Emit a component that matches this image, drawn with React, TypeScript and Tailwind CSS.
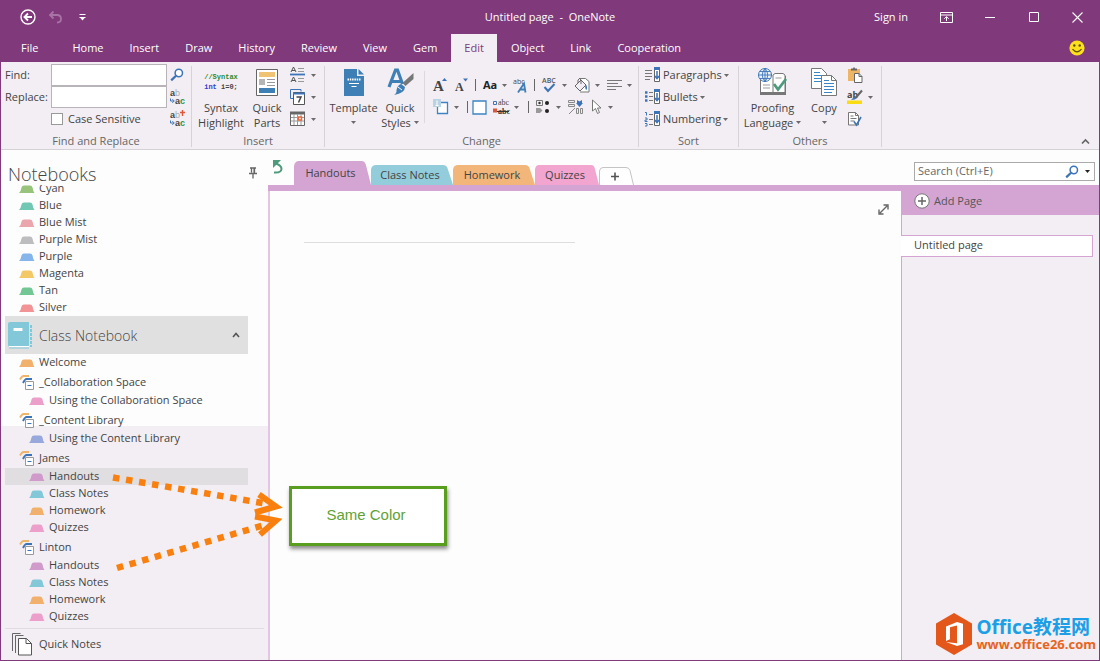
import type { ReactNode } from "react";

function Caret({ dark = false }: { dark?: boolean }) {
  return (
    <svg width="5" height="3" viewBox="0 0 5 3" className="shrink-0" aria-hidden="true">
      <path d="M0 0h5L2.5 3z" fill={dark ? "#222" : "#6a6a6a"} />
    </svg>
  );
}

function Icon({ w = 16, h = 16, children }: { w?: number; h?: number; children: ReactNode }) {
  return (
    <svg width={w} height={h} viewBox={`0 0 ${w} ${h}`} fill="none" className="shrink-0 overflow-visible" aria-hidden="true">
      {children}
    </svg>
  );
}

function SearchIcon() {
  return (
    <Icon w={14} h={14}>
      <circle cx="8.8" cy="5" r="3.7" stroke="#3d74b8" strokeWidth="1.5" fill="#fff" />
      <path d="M6 7.8L1.2 12.4" stroke="#3d74b8" strokeWidth="2.2" />
    </Icon>
  );
}

function ReplaceIcon({ all = false }: { all?: boolean }) {
  return (
    <Icon w={16} h={18}>
      <text x="0" y="8" fontFamily="Liberation Sans, sans-serif" fontSize="9" fontWeight="700" fill="#444">a</text>
      <text x="5" y="8" fontFamily="Liberation Sans, sans-serif" fontSize="9" fill="#aaa">b</text>
      <path d="M.5 10.500v2.500h3M2.300 11.300l2 1.700-2 1.700" stroke="#3d74b8" />
      <text x="5" y="16" fontFamily="Liberation Sans, sans-serif" fontSize="9" fontWeight="700" fill="#444">a</text>
      <text x="10" y="16" fontFamily="Liberation Sans, sans-serif" fontSize="9" fontWeight="700" fill="#2d9640">c</text>
      {all && <path d="M12.500 0v6M10 2.500h5" stroke="#e2553a" strokeWidth="1.400" />}
    </Icon>
  );
}

function Group({ label, className, children }: { label: string; className: string; children: ReactNode }) {
  return (
    <section aria-label={label} className={`flex shrink-0 flex-col ${className}`}>
      <div className="flex h-[69px]">{children}</div>
      <div className="text-center leading-4 text-[#666]">{label}</div>
    </section>
  );
}

function Divider() {
  return <div className="my-0.5 w-px shrink-0 bg-[#d6d2d8]" />;
}

function BigButton({ icon, lines, caret, className }: { icon: ReactNode; lines: string[]; caret?: boolean; className: string }) {
  return (
    <button className={`flex shrink-0 flex-col items-center whitespace-nowrap leading-[15px] ${className}`}>
      <span className="flex h-9 items-center">{icon}</span>
      <span>{lines[0]}</span>
      <span className="flex h-[15px] items-center gap-[3px]">
        {lines[1]}
        {caret && <Caret />}
      </span>
    </button>
  );
}

function Tool({ label, caret, children }: { label: string; caret?: boolean; children: ReactNode }) {
  return (
    <button aria-label={label} title={label} className="flex h-[22px] items-center gap-[5px]">
      {children}
      {caret && <Caret />}
    </button>
  );
}

function Bar() {
  return <span className="h-3 w-px bg-[#666]" />;
}

const ribbonTabs = ["Home", "Insert", "Draw", "History", "Review", "View", "Gem", "Edit", "Object", "Link", "Cooperation"];

function TitleBar() {
  return (
    <header className="bg-[#80397b] text-white">
      <div className="grid h-[34px] grid-cols-[1fr_auto_1fr] items-center">
        <div className="flex items-center gap-3 pl-[19px]">
          <button aria-label="Back">
            <Icon>
              <circle cx="8" cy="8" r="7" stroke="#fff" strokeWidth="1.4" />
              <path d="M12 8H5M8 4.500L4.500 8 8 11.500" stroke="#fff" strokeWidth="1.900" />
            </Icon>
          </button>
          <button aria-label="Undo">
            <Icon w={15} h={14}>
              <path d="M5.500 1.500L2 5l3.500 3.500M2 5h7q4 0 4 4 0 3.500-4 3.500" stroke="#a873a5" strokeWidth="1.800" />
            </Icon>
          </button>
          <button aria-label="Customize Quick Access Toolbar" className="pl-1">
            <Icon w={7} h={8}>
              <path d="M.5 1.500h6M.5 4.500h6" stroke="#fff" />
              <path d="M1 4.500h5L3.500 7.500z" fill="#fff" />
            </Icon>
          </button>
        </div>
        <h1 className="whitespace-pre">Untitled page  -  OneNote</h1>
        <div className="flex items-center justify-end pr-4">
          <button className="mr-8">Sign in</button>
          <button aria-label="Ribbon Display Options" className="mr-8">
            <Icon w={13} h={11}>
              <path d="M.5.5h12v10H.5zM.5 3h12M6.500 9V4.800M4.300 6.800l2.200-2.200 2.200 2.200" stroke="#fff" />
            </Icon>
          </button>
          <button aria-label="Minimize" className="mr-[34px]">
            <Icon w={10} h={11}><path d="M0 5.500h10" stroke="#fff" /></Icon>
          </button>
          <button aria-label="Maximize" className="mr-8">
            <Icon w={11} h={11}><path d="M.5.5h9v9h-9z" stroke="#fff" /></Icon>
          </button>
          <button aria-label="Close">
            <Icon w={11} h={11}><path d="M.5.5l10 10M10.500.5l-10 10" stroke="#fff" strokeWidth="1.100" /></Icon>
          </button>
        </div>
      </div>
      <nav className="flex h-7 items-stretch pl-[7px] pr-[14px]">
        <button className="mr-2 px-[13px]">File</button>
        {ribbonTabs.map((t) => (
          <button key={t} className={t === "Edit" ? "mx-px bg-[#f2eef3] px-[13px] text-[#80397b]" : "px-[13px]"}>
            {t}
          </button>
        ))}
        <button aria-label="Feedback" className="ml-auto">
          <Icon>
            <circle cx="8" cy="8" r="7.600" fill="#fbe01c" />
            <circle cx="5.300" cy="5.500" r="1.200" fill="#5b4b12" />
            <circle cx="10.700" cy="5.500" r="1.200" fill="#5b4b12" />
            <path d="M3.500 9.200q4.500 5.300 9 0" stroke="#5b4b12" strokeWidth="1.200" />
          </Icon>
        </button>
      </nav>
    </header>
  );
}

function SortIcon({ kind }: { kind: string }) {
  return (
    <Icon w={16} h={16}>
      {kind === "Paragraphs" && <path d="M0 3.500h7M0 6.500h7M0 9.500h7M0 12.500h5" stroke="#777" />}
      {kind === "Bullets" && <path d="M4 3.500h4M4 7.500h4M4 11.500h4" stroke="#777" />}
      {kind === "Bullets" && <path d="M0 3.500h2.500M0 7.500h2.500M0 11.500h2.500" stroke="#3d74b8" strokeWidth="2.500" />}
      {kind === "Numbering" && <path d="M4 3.500h4M4 8.500h4M4 13.500h4" stroke="#777" />}
      {kind === "Numbering" && <path d="M0 1.500h1.500v3M0 7h2v2H0v1.500h2.500M0 12.500h2V15H0" stroke="#3d74b8" />}
      <path d="M9.500 1.500h5v13h-5z" stroke="#666" fill="#fff" />
      <path d="M9 1.500h6" stroke="#3d74b8" strokeWidth="3" />
      <path d="M12 4v7M9.800 9l2.200 2.500L14.200 9" stroke="#3d74b8" strokeWidth="1.500" />
    </Icon>
  );
}

function Ribbon() {
  return (
    <div className="flex border-b border-[#d5d1d7] bg-[#f2eef3] pt-0.5 text-[#444]">
      <Group label="Find and Replace" className="w-[190px]">
        <div className="grid auto-rows-[22px] grid-cols-[46px_116px_auto] items-center pl-1">
          <label htmlFor="find">Find:</label>
          <input id="find" className="h-[22px] min-w-0 border border-[#b8b4ba] bg-white px-1 outline-none" />
          <button aria-label="Find next" className="pl-[3px]"><SearchIcon /></button>
          <label htmlFor="replace">Replace:</label>
          <input id="replace" className="h-[22px] min-w-0 border border-[#b8b4ba] bg-white px-1 outline-none" />
          <button aria-label="Replace" className="pl-[3px]"><ReplaceIcon /></button>
          <label className="col-start-2 flex items-center gap-[5px] whitespace-nowrap">
            <input type="checkbox" className="size-3 appearance-none border border-[#999] bg-white checked:bg-[#80397b]" />
            Case Sensitive
          </label>
          <button aria-label="Replace all" className="pl-[3px]"><ReplaceIcon all /></button>
        </div>
      </Group>
      <Divider />
      <Group label="Insert" className="w-[132px]">
        <BigButton
          className="w-[58px]"
          lines={["Syntax", "Highlight"]}
          icon={
            <span className="flex flex-col items-center font-['Liberation_Mono'] text-[7px] font-bold leading-[10px]">
              <span className="text-[#2d8a2d]">//Syntax</span>
              <span><span className="text-[#3a3ad0]">int</span> i=0;</span>
            </span>
          }
        />
        <BigButton
          className="w-[34px]"
          lines={["Quick", "Parts"]}
          icon={
            <Icon w={22} h={27}>
              <path d="M.5.5h21v26H.5z" stroke="#666" fill="#fff" />
              <path d="M3 3h16v5H3z" fill="#f0c274" />
              <path d="M3 10h6v6H3z" fill="#b5b5b5" />
              <path d="M11 10.500h8M11 13.500h8M11 16.500h8" stroke="#999" />
              <path d="M3 19h16v5H3z" fill="#3e7fb6" />
            </Icon>
          }
        />
        <div className="flex flex-col pl-1.5">
          <Tool label="Insert separator" caret>
            <Icon>
              <path d="M1 5L3.500 0 6 5M2 3.500h3M1 15l2.500-5L6 15M2 13.500h3" stroke="#555" />
              <path d="M8 1.500h6M8 4.500h6M8 11.500h6M8 14.500h6" stroke="#999" />
              <path d="M0 7.500h15" stroke="#3d74b8" strokeWidth="1.800" />
            </Icon>
          </Tool>
          <Tool label="Insert date" caret>
            <Icon>
              <path d="M11 2.500V.500H.5v9H3" stroke="#3d74b8" />
              <path d="M3.500 3.500h11v12h-11z" stroke="#555" fill="#fff" />
              <path d="M3 4.500h12" stroke="#3d74b8" strokeWidth="2" />
              <path d="M6.500 8h4.500L8.500 13.500" stroke="#444" strokeWidth="1.500" />
            </Icon>
          </Tool>
          <Tool label="Insert calendar" caret>
            <Icon>
              <path d="M.5 1.500h14v13H.5z" stroke="#666" fill="#fff" />
              <path d="M0 2h15" stroke="#666" strokeWidth="3" />
              <path d="M4 3v11M7.500 3v11M11 3v11M1 6.500h13M1 10h13" stroke="#999" />
              <path d="M8.500 6h3v3h-3z" stroke="#e8673c" strokeWidth="1.500" fill="#fff" />
            </Icon>
          </Tool>
        </div>
      </Group>
      <Divider />
      <Group label="Change" className="w-[313px]">
        <BigButton
          className="w-[57px]"
          caret
          lines={["Template"]}
          icon={
            <Icon w={20} h={27}>
              <path d="M0 0h13v7h7v20H0z" fill="#3e7fb6" />
              <path d="M14.500 0L20 5.500h-5.500z" fill="#3e7fb6" />
              <path d="M3.500 10.500h13" stroke="#fff" strokeWidth="2" strokeDasharray="1.500 .8" />
              <path d="M5 14.500h10M7.500 17.500h5" stroke="#fff" />
            </Icon>
          }
        />
        <BigButton
          className="w-9"
          caret
          lines={["Quick", "Styles"]}
          icon={
            <Icon w={27} h={28}>
              <path d="M2 19L8.500 2h2l5 14M5 13.500h9" stroke="#3e7fb6" strokeWidth="3.200" />
              <path d="M26.500 5v6l-8 7-3-3z" fill="#777" />
              <path d="M14 16l4 3q0 6-11 8 3-2 2.500-5 1-5 4.500-6z" fill="#3e7fb6" />
              <path d="M11 19l4 3" stroke="#fff" />
            </Icon>
          }
        />
        <div className="ml-1.5 mt-[7px] h-[52px] w-px bg-[#dcd8de]" />
        <div className="flex flex-col pl-2 pt-2.5">
          <div className="flex items-center">
            <div className="flex w-[42px] gap-2">
              <Tool label="Grow font">
                <Icon w={14} h={16}>
                  <text x="0" y="14" fontFamily="Liberation Serif, serif" fontSize="15" fontWeight="700" fill="#444">A</text>
                  <path d="M9 4l2.500-3L14 4z" fill="#3d74b8" />
                </Icon>
              </Tool>
              <Tool label="Shrink font">
                <Icon w={13} h={16}>
                  <text x="0" y="14" fontFamily="Liberation Serif, serif" fontSize="12" fontWeight="700" fill="#444">A</text>
                  <path d="M8 1.500h5l-2.500 3z" fill="#3d74b8" />
                </Icon>
              </Tool>
            </div>
            <Bar />
            <div className="flex w-[58px] gap-1.5 pl-[7px]">
              <Tool label="Change case" caret><b className="text-[11px] text-[#222]">Aa</b></Tool>
              <Tool label="Character style">
                <Icon w={15} h={16}>
                  <text x="0" y="7" fontFamily="Open Sans, sans-serif" fontSize="7" fill="#444">abc</text>
                  <path d="M5 15.500L11 6.500l1.500 9M7 12.500h5" stroke="#3e7fb6" strokeWidth="1.800" />
                </Icon>
              </Tool>
            </div>
            <Bar />
            <div className="flex gap-[7px] pl-[7px]">
              <Tool label="Spelling" caret>
                <Icon w={15} h={16}>
                  <text x="0" y="6" fontFamily="Open Sans, sans-serif" fontSize="7" fontWeight="600" fill="#555">ABC</text>
                  <path d="M2.500 10l3.500 4 6.500-7" stroke="#3d74b8" strokeWidth="2" />
                </Icon>
              </Tool>
              <Tool label="Fill color" caret>
                <Icon>
                  <path d="M5 1.500h6.500l3.500 3v10.500H6" stroke="#777" fill="#fff" />
                  <path d="M1 9l6-6 5 5-6 6z" stroke="#666" fill="#f2eef3" />
                  <path d="M4 6V3q2-3 3 0v4" stroke="#666" />
                  <path d="M11.500 7q2.500 3 1 6-2-1-1-6z" fill="#3d74b8" />
                </Icon>
              </Tool>
              <Tool label="Alignment" caret>
                <Icon w={15} h={16}><path d="M0 3.500h15M0 6.500h11M0 9.500h15M0 12.500h9" stroke="#777" /></Icon>
              </Tool>
            </div>
          </div>
          <div className="flex items-center">
            <div className="flex w-[34px]">
              <Tool label="Container" caret>
                <Icon>
                  <path d="M4.500 3.500h10v11h-10z" stroke="#3d84c4" strokeWidth="1.300" fill="#fff" />
                  <path d="M0 0h8v8H0z" fill="#b9d3e6" />
                  <path d="M4 1.500v5M2.500 6.500h3" stroke="#fff" />
                </Icon>
              </Tool>
            </div>
            <Bar />
            <div className="flex w-[60px] gap-[6px] pl-1">
              <Tool label="Border"><Icon w={15} h={15}><path d="M1 1h13v13H1z" stroke="#3d84c4" strokeWidth="1.300" fill="#fff" /></Icon></Tool>
              <Tool label="Tags" caret>
                <Icon>
                  <path d="M.5 2.500h3v3h-3z" stroke="#3d74b8" />
                  <path d="M0 9.500h4v4H0z" fill="#d9583b" />
                  <text x="5" y="6" fontFamily="Liberation Serif, serif" fontSize="8" fill="#444">abc</text>
                  <text x="5" y="15" fontFamily="Liberation Serif, serif" fontSize="8" fontWeight="700" fill="#333">abc</text>
                  <path d="M4 12.500h12" stroke="#333" />
                </Icon>
              </Tool>
            </div>
            <Bar />
            <div className="flex gap-[7px] pl-[7px]">
              <Tool label="Bullets" caret>
                <Icon w={15} h={16}>
                  <path d="M.5 1.500h6v5h-6z" stroke="#777" />
                  <circle cx="3.500" cy="4" r="1.200" fill="#333" />
                  <path d="M0 9h4l2.500 2.500L4 14H0z" fill="#999" />
                  <circle cx="11" cy="4" r="2" fill="#222" />
                  <circle cx="11" cy="12" r="2" fill="#222" />
                </Icon>
              </Tool>
              <Tool label="Convert layout">
                <Icon>
                  <path d="M.5 1.500h6v2h-6zM.5 5.500h6v2h-6zM8.500 9.500h2v5h-2zM12.500 9.500h2v5h-2zM1 15L7 9" stroke="#888" />
                  <path d="M9 1l2.500 1.500L14 1v3h1l-3.500 4L8 4h1z" fill="#3d74b8" />
                </Icon>
              </Tool>
              <Tool label="Select" caret>
                <Icon w={12} h={16}><path d="M1.500 1v11l3-2.500 2 5 2-1-2-4.500h3.500z" stroke="#777" fill="#fff" /></Icon>
              </Tool>
            </div>
          </div>
        </div>
      </Group>
      <Divider />
      <Group label="Sort" className="w-[99px]">
        <div className="flex flex-col pl-1.5">
          {["Paragraphs", "Bullets", "Numbering"].map((k) => (
            <button key={k} className="flex h-[22px] items-center gap-0.5">
              <SortIcon kind={k} />
              {k}
              <Caret />
            </button>
          ))}
        </div>
      </Group>
      <Divider />
      <Group label="Others" className="w-[142px]">
        <BigButton
          className="w-[67px]"
          caret
          lines={["Proofing", "Language"]}
          icon={
            <Icon w={29} h={28}>
              <path d="M2.500 10v16.500h25V8" stroke="#777" fill="#fff" />
              <path d="M2 25.500h26" stroke="#777" strokeWidth="3" />
              <path d="M15 24V7l2-1.500h8l2 1.500v17" stroke="#777" fill="#fff" />
              <path d="M5 17h7M5 20h7M17.500 10h6" stroke="#999" />
              <circle cx="7" cy="7" r="6.500" stroke="#3d74b8" fill="#e8f1f8" />
              <path d="M.5 7h13M7 .5v13M2 3.500h10M2 10.500h10M7 .5q-5.500 6.500 0 13M7 .5q5.500 6.500 0 13" stroke="#3d74b8" strokeWidth=".9" />
              <path d="M16 16l4 5.500L28 11" stroke="#4d9a7c" strokeWidth="2.800" />
            </Icon>
          }
        />
        <BigButton
          className="w-9"
          caret
          lines={["Copy"]}
          icon={
            <Icon w={26} h={28}>
              <path d="M.5.5h10l5 5v15H.5z" stroke="#777" fill="#fff" />
              <path d="M3 4.500h6M3 7.500h8M3 10.500h8M3 13.500h8" stroke="#3d84c4" />
              <path d="M10.500 7.500h10l5 5v15h-15z" stroke="#777" fill="#fff" />
              <path d="M20.500 7.500v5h5" stroke="#777" />
              <path d="M13 12.500h5M13 15.500h10M13 18.500h10M13 21.500h10M13 24.500h8" stroke="#3d84c4" />
            </Icon>
          }
        />
        <div className="flex flex-col pl-[5px]">
          <Tool label="Paste">
            <Icon>
              <path d="M1 2h12v12H1z" fill="#edb565" />
              <path d="M4 3.500V1.500h2q1-2.500 2 0h2v2z" fill="#666" />
              <path d="M7.500 6.500h4.500l3 3v6H7.500z" stroke="#666" fill="#fff" />
              <path d="M12 6.500v3h3" stroke="#666" />
            </Icon>
          </Tool>
          <Tool label="Highlight" caret>
            <Icon>
              <text x="0" y="8.500" fontFamily="Open Sans, sans-serif" fontSize="9" fontWeight="700" fill="#444">ab</text>
              <path d="M15 1.500L8 9.500" stroke="#666" strokeWidth="2" />
              <path d="M4 11q2-3 4-2.500v2z" fill="#3d74b8" />
              <path d="M0 11.500h15V15H0z" fill="#fbdc12" />
            </Icon>
          </Tool>
          <Tool label="Check page">
            <Icon>
              <path d="M1.500 1.500h7l3 3v9.500h-10z" stroke="#777" fill="#fff" />
              <path d="M8.500 1.500v3h3M3.500 5h3M3.500 7.500h6M3.500 10h4" stroke="#777" />
              <path d="M7 10.500l2.500 3.500 4.500-8" stroke="#3d74b8" strokeWidth="1.600" />
            </Icon>
          </Tool>
        </div>
      </Group>
      <Divider />
      <button aria-label="Collapse the Ribbon" className="ml-auto mr-[9px] self-end pb-1">
        <Icon w={9} h={7}><path d="M1 5.500L4.500 2 8 5.500" stroke="#666" strokeWidth="1.700" /></Icon>
      </button>
    </div>
  );
}

type Row = { name: string; color: string };
const colors: Row[] = [
  { name: "Cyan", color: "#97c47a" },
  { name: "Blue", color: "#70c8b4" },
  { name: "Blue Mist", color: "#eaa6ac" },
  { name: "Purple Mist", color: "#bdbdc0" },
  { name: "Purple", color: "#85b5ea" },
  { name: "Magenta", color: "#f3c968" },
  { name: "Tan", color: "#72c795" },
  { name: "Silver", color: "#f29496" },
];
const student: Row[] = [
  { name: "Handouts", color: "#d09acb" },
  { name: "Class Notes", color: "#82c8d8" },
  { name: "Homework", color: "#f1b06c" },
  { name: "Quizzes", color: "#ec9fca" },
];

function Section({ row, nested, active }: { row: Row; nested?: boolean; active?: boolean }) {
  return (
    <li className={active ? "bg-[#e1dee1]" : ""}>
      <a href="#" className={`flex h-[17px] items-center gap-1 ${nested ? "pl-6" : "pl-[14px]"}`}>
        <svg width="16" height="8" viewBox="0 0 16 8" aria-hidden="true">
          <path d="M0 8Q2 6 2.500 2.500 3 .5 5 .5h6q2 0 2.500 2Q14 6 15.500 8z" fill={row.color} />
        </svg>
        {row.name}
      </a>
    </li>
  );
}

function SectionGroup({ name, rows, selected }: { name: string; rows: Row[]; selected?: string }) {
  return (
    <li>
      <a href="#" className="flex h-[21px] items-center gap-1 pl-[14px] pt-0.5">
        <Icon w={16} h={15}>
          <path d="M1 4.500Q3 1 4.500 1H10" stroke="#efb568" strokeWidth="1.800" />
          <path d="M4 8Q6 4 7.500 4H13" stroke="#3d74b8" strokeWidth="1.900" />
          <path d="M6.500 6.500h8v8h-8z" stroke="#999" fill="#fff" />
          <path d="M8.500 10.500h4" stroke="#3d74b8" />
        </Icon>
        {name}
      </a>
      <ul>
        {rows.map((r) => (
          <Section key={r.name} row={r} nested active={r.name === selected} />
        ))}
      </ul>
    </li>
  );
}

function Sidebar() {
  return (
    <aside className="flex w-[267px] shrink-0 flex-col bg-[linear-gradient(to_bottom,#fdfdfd_276px,#f2eef3_276px)] text-[#444]">
      <div className="flex h-[35px] shrink-0 items-end justify-between pl-[7px] pr-[11px]">
        <h2 className="text-[18px] font-light leading-[21px]">Notebooks</h2>
        <button aria-label="Unpin" className="pb-1.5">
          <Icon w={8} h={12}>
            <path d="M1 1h6M2.500 1v4.500M5.500 1v4.500M0 6.500h8M4 6v5.500" stroke="#666" strokeWidth="1.300" />
            <path d="M4.500 1h1.500v5H4.500z" fill="#666" />
          </Icon>
        </button>
      </div>
      <div className="mr-5 overflow-hidden pl-1">
        <ul className="-mt-[5px]">
          {colors.map((c) => (
            <Section key={c.name} row={c} />
          ))}
        </ul>
        <button className="flex h-[38px] w-full items-center bg-[#e1e0e1] pl-[3px] pr-2 text-[14px] font-light">
          <Icon w={25} h={27}>
            <path d="M0 1.500Q0 0 2 0h19v25H2q-2 0-2-2z" fill="#82c8d8" />
            <path d="M1 24.500h20" stroke="#fff" />
            <path d="M1 26h20" stroke="#82c8d8" />
            <path d="M5.500 6h9v3h-9z" fill="#fff" />
            <path d="M23 3v22" stroke="#82c8d8" strokeWidth="2" strokeDasharray="3 1" />
          </Icon>
          <span className="ml-[6px]">Class Notebook</span>
          <span className="ml-auto">
            <Icon w={8} h={6}><path d="M1 5l3-3.500L7 5" stroke="#555" strokeWidth="1.600" /></Icon>
          </span>
        </button>
        <ul>
          <Section row={{ name: "Welcome", color: "#f1b06c" }} />
          <SectionGroup name="_Collaboration Space" rows={[{ name: "Using the Collaboration Space", color: "#ec9fca" }]} />
          <SectionGroup name="_Content Library" rows={[{ name: "Using the Content Library", color: "#98a8dc" }]} />
          <SectionGroup name="James" rows={student} selected="Handouts" />
          <SectionGroup name="Linton" rows={student} />
        </ul>
      </div>
      <a href="#" className="mx-1 mt-[3px] flex h-8 items-center gap-[7px] border-t border-[#e0dce1] pl-[7px]">
        <Icon w={20} h={23}>
          <path d="M.5 18V.5h8M3.500 20V2.500h8" stroke="#666" />
          <path d="M6.500 5.500h8l5 5v11.500h-13z" stroke="#555" fill="#fff" />
          <path d="M14 5.500v5h5.500" stroke="#555" />
        </Icon>
        Quick Notes
      </a>
    </aside>
  );
}

function PageTab({ label, fill, className }: { label: string; fill: string; className: string }) {
  return (
    <button className={`relative pt-px text-[#444] ${className}`}>
      <svg viewBox="0 0 80 24" preserveAspectRatio="none" className="absolute inset-0 size-full" aria-hidden="true">
        <path d="M0 24V5Q1 0 5 0H70Q74 0 75 5L80 24z" fill={fill} />
      </svg>
      <span className="relative pr-1">{label}</span>
    </button>
  );
}

function Workspace() {
  return (
    <main className="flex min-w-0 flex-1 flex-col bg-[#fdfdfd]">
      <div className="flex h-[35px] shrink-0 items-end">
        <button aria-label="Sync" className="ml-[5px] mr-[11px] self-center">
          <Icon w={10} h={15}>
            <path d="M0 0h8L5.500 2.500 3 5 0 8z" fill="#4d9a7c" />
            <path d="M3 3.500q5.500 2 5.500 5.500Q8 13.200 1 12.500" stroke="#4d9a7c" strokeWidth="2" />
          </Icon>
        </button>
        <PageTab label="Handouts" fill="#d4a5d3" className="h-6 w-[77px]" />
        <PageTab label="Class Notes" fill="#93cddc" className="h-5 w-[82px]" />
        <PageTab label="Homework" fill="#f2b57a" className="h-5 w-[82px]" />
        <PageTab label="Quizzes" fill="#f2a5cf" className="h-5 w-[64px]" />
        <button aria-label="Create a New Section">
          <Icon w={35} h={18}>
            <path d="M.5 18V4Q1 .5 4 .5h23q3 0 4 3L34.500 18" stroke="#c4c4c4" fill="#fff" />
            <path d="M16 5.500v8M12 9.500h8" stroke="#555" strokeWidth="1.600" />
          </Icon>
        </button>
        <div className="mb-1 ml-auto mr-1 flex h-[19px] w-[181px] items-center gap-1 border border-[#aaa] bg-white pl-[3px] pr-1">
          <input aria-label="Search" placeholder="Search (Ctrl+E)" className="min-w-0 flex-1 outline-none placeholder:text-[#666]" />
          <button aria-label="Search notes"><SearchIcon /></button>
          <button aria-label="Search scope" className="pl-0.5"><Caret dark /></button>
        </div>
      </div>
      <div className="flex flex-1 border-t-[6px] border-[#d4a5d3]">
        <section className="flex flex-1 items-start justify-between border-l-2 border-[#e3c6e2] pl-[34px] pr-3">
          <input aria-label="Page title" className="mt-6 h-7 w-[271px] border-b border-[#dedede] bg-transparent text-[20px] outline-none" />
          <button aria-label="Full page view" className="mt-[13px]">
            <Icon w={11} h={11}>
              <path d="M2 9L9 2M5.500 1H10v4.500M1 5.500V10h4.500" stroke="#666" strokeWidth="1.400" />
            </Icon>
          </button>
        </section>
        <aside className="w-[198px] shrink-0 border-l border-[#d4a5d3] bg-[#f2eef3]">
          <button className="flex h-6 w-full items-center gap-1 bg-[#d4a5d3] pb-1 pl-3 text-[#555]">
            <Icon>
              <circle cx="8" cy="8" r="7.200" stroke="#777" fill="#fff" />
              <path d="M8 4v8M4 8h8" stroke="#666" strokeWidth="1.500" />
            </Icon>
            Add Page
          </button>
          <a href="#" className="-ml-px mr-1.5 mt-5 flex h-[22px] items-center border border-l-0 border-[#d4a5d3] bg-white pb-px pl-[13px] text-[#444]">
            Untitled page
          </a>
        </aside>
      </div>
    </main>
  );
}

function Annotations() {
  return (
    <>
      <svg width="180" height="110" viewBox="110 470 180 110" fill="none" stroke="#f9800f" className="pointer-events-none absolute left-[109px] top-[470px]" aria-hidden="true">
        <path d="M113 477.500L268 504" strokeWidth="6.500" strokeDasharray="6.500 6.700" />
        <path d="M117 568L268 524" strokeWidth="6.500" strokeDasharray="6.500 6.600" />
        <path d="M259 494.500L276 506.500 255 512.500" strokeWidth="6" />
        <path d="M255 516.500L276 520.500 260 534.500" strokeWidth="6" />
      </svg>
      <div className="absolute left-[288px] top-[486px] flex h-[60px] w-[158px] items-center justify-center border-[3px] border-[#5a9e1f] bg-white pb-0.5 pr-1 font-['Liberation_Sans'] text-[15px] text-[#5fa235] shadow-[1px_3px_4px_rgba(0,0,0,0.45)]">
        Same Color
      </div>
      <div className="absolute bottom-[5px] right-[3px] flex items-center gap-1 font-bold">
        <Icon w={36} h={42}>
          <path d="M18 0l18 10.500v21L18 42 0 31.500v-21z" fill="#e4571b" />
          <path d="M10 13.500L21 9l6 1.800v20.400L21 33l-11-4 11 1.200V12.500l-7 1.800v11.900L10 28z" fill="#fff" />
        </Icon>
        <div className="flex flex-col font-['Open_Sans','Noto_Sans_CJK_SC',sans-serif]">
          <span className="text-[19px] leading-[20px] text-[#1c9fe6]">Office教程网</span>
          <span className="text-[13px] leading-[14px] text-[#e8641c]">www.office26.com</span>
        </div>
      </div>
    </>
  );
}

export default function App() {
  return (
    <div className="relative flex min-h-screen flex-col overflow-hidden border border-t-0 border-[#80397b] bg-[#fdfdfd] font-['Open_Sans','Noto_Sans',sans-serif] text-[11px]">
      <TitleBar />
      <Ribbon />
      <div className="flex flex-1">
        <Sidebar />
        <Workspace />
      </div>
      <Annotations />
    </div>
  );
}
